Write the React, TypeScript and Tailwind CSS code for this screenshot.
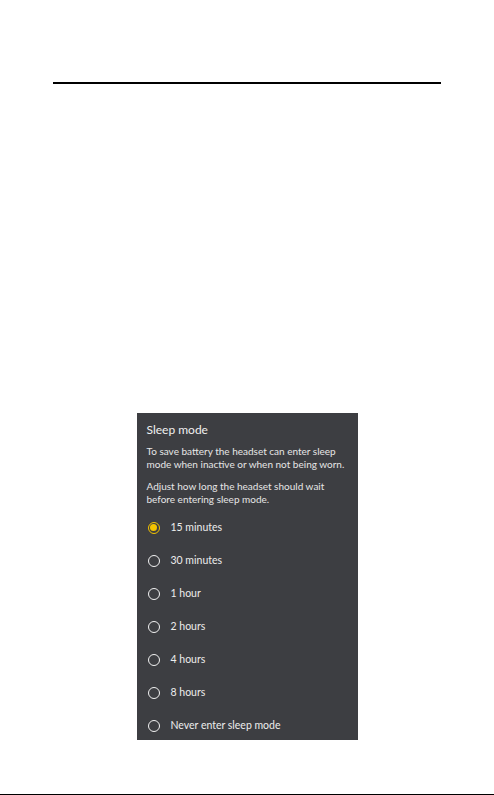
import React from 'react';

const options = [
  '15 minutes',
  '30 minutes',
  '1 hour',
  '2 hours',
  '4 hours',
  '8 hours',
  'Never enter sleep mode',
];

const Radio: React.FC<{ checked: boolean }> = ({ checked }) =>
  checked ? (
    <span className="flex h-[12px] w-[12px] items-center justify-center rounded-full border-[1.5px] border-[#f3c300]">
      <span className="h-[7px] w-[7px] rounded-full bg-[#f3c300]" />
    </span>
  ) : (
    <span className="h-[12px] w-[12px] rounded-full border-[1.5px] border-[#f2f2f2]" />
  );

export default function App() {
  return (
    <div
      className="relative flex h-[795px] w-[494px] flex-col bg-white"
      style={{ fontFamily: 'Lato, "Noto Sans", sans-serif' }}
    >
      <div className="px-[53px] pt-[82px]">
        <div className="h-[2px] bg-black" />
      </div>

      <div className="mx-auto mt-[329px] h-[327px] w-[221px] bg-[#3d3e42] px-[10px]">
        <div className="pt-[9px] text-[12px] leading-[16px] text-[#f0f0f0]">Sleep mode</div>
        <p className="mt-[7px] whitespace-nowrap text-[10px] leading-[13px] text-[#e6e6e6]">
          To save battery the headset can enter sleep
          <br />
          mode when inactive or when not being worn.
        </p>
        <p className="mt-[9px] whitespace-nowrap text-[10px] leading-[13px] text-[#e6e6e6]">
          Adjust how long the headset should wait
          <br />
          before entering sleep mode.
        </p>
        <div className="mt-[5px] flex flex-col">
          {options.map((o, i) => (
            <div key={o} className="flex h-[33px] items-center gap-[11px] pl-[1px]">
              <Radio checked={i === 0} />
              <span className="text-[10.5px] text-[#ededed]">{o}</span>
            </div>
          ))}
        </div>
      </div>

      <div className="mt-auto h-px bg-black" />
    </div>
  );
}
